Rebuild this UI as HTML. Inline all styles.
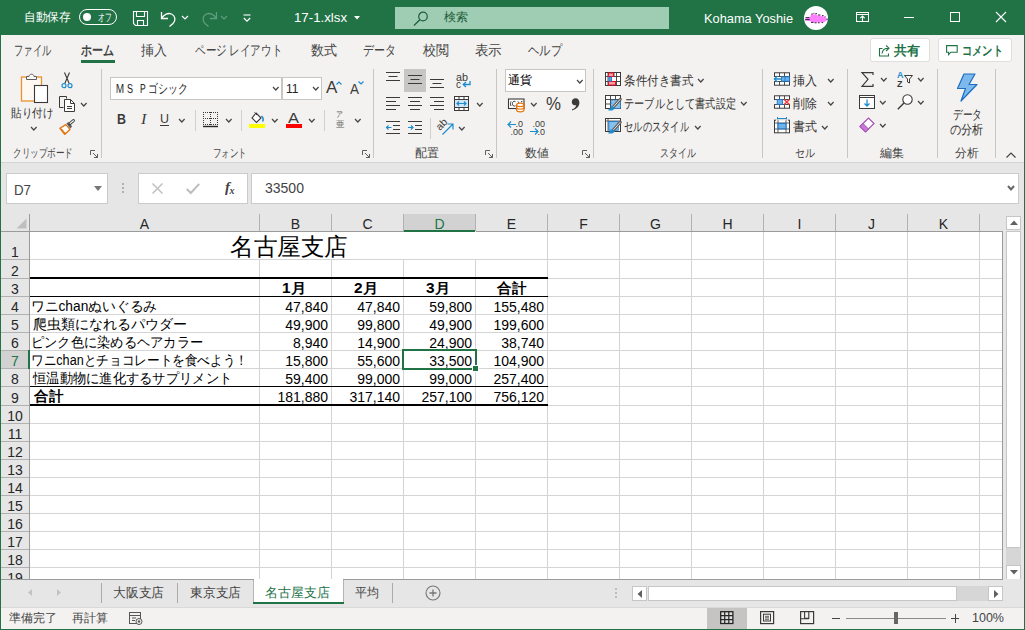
<!DOCTYPE html>
<html lang="ja"><head><meta charset="utf-8"><title>17-1.xlsx - Excel</title>
<style>
*{box-sizing:border-box;margin:0;padding:0}
html,body{width:1025px;height:630px;overflow:hidden;background:#e6e6e6}
body{position:relative;font-family:"Liberation Sans",sans-serif;font-size:12px;color:#262626}
.a{position:absolute}
.t{position:absolute;white-space:nowrap;line-height:1;transform-origin:0 0}
.n{position:absolute;white-space:nowrap;line-height:1;text-align:right;font-size:14px;color:#000;width:70px}
.c{position:absolute;white-space:nowrap;line-height:1;text-align:center;font-size:14px;color:#262626}
svg{overflow:visible}
</style></head>
<body>
<div class="a" style="left:0px;top:0px;width:1025px;height:35px;background:#217346"></div>
<div class="t" style="left:24px;top:11px;font-size:12px;color:#fff;transform:scaleX(0.979)">自動保存</div><div class="a" style="left:79px;top:9px;width:38px;height:16px;border:1px solid #fff;border-radius:8px"></div><div class="a" style="left:83px;top:13px;width:8px;height:8px;background:#fff;border-radius:4px"></div><div class="t" style="left:98px;top:12px;font-size:11px;color:#fff;transform:scaleX(0.614)">オフ</div>
<svg class="a" style="left:132px;top:10px" width="17" height="17" viewBox="0 0 17 17"><path d="M1.5 1.5 H15.5 V15.5 H3.5 L1.5 13.5 Z M4.5 1.5 V6.5 H12.5 V1.5 M5.5 15.5 V10.5 H11.5 V15.5" fill="none" stroke="#fff" stroke-width="1.1"/></svg><svg class="a" style="left:160px;top:10px" width="18" height="18" viewBox="0 0 18 18"><path d="M1.5 2 V8.5 H8 M1.8 8.2 C4 4.5 8 2.5 11.5 4 C15.5 5.8 16 10.5 13 13.5 L9.5 16.5" fill="none" stroke="#fff" stroke-width="1.3"/></svg><svg class="a" style="left:181px;top:14.8px" width="8" height="5" viewBox="0 0 8 5"><path d="M1 1 L4 4 L7 1" fill="none" stroke="#fff" stroke-width="1.2"/></svg><svg class="a" style="left:200px;top:10px" width="18" height="18" viewBox="0 0 18 18"><path d="M16.5 2 V8.5 H10 M16.2 8.2 C14 4.5 10 2.5 6.5 4 C2.5 5.8 2 10.5 5 13.5 L8.5 16.5" fill="none" stroke="#5f9d7c" stroke-width="1.3"/></svg><svg class="a" style="left:220px;top:14.8px" width="8" height="5" viewBox="0 0 8 5"><path d="M1 1 L4 4 L7 1" fill="none" stroke="#5f9d7c" stroke-width="1.2"/></svg><svg class="a" style="left:243px;top:14px" width="8" height="9" viewBox="0 0 8 9"><path d="M0.5 1 H7.5" stroke="#fff" stroke-width="1.1"/><path d="M0.8 4 L4 7.2 L7.2 4" fill="none" stroke="#fff" stroke-width="1.2"/></svg>
<div class="t" style="left:294px;top:11px;font-size:13px;color:#fff;transform:scaleX(1.019)">17-1.xlsx</div><svg class="a" style="left:354px;top:16px" width="7" height="4" viewBox="0 0 7 4"><path d="M0 0 H6 L3 3.5 Z" fill="#fff"/></svg><div class="a" style="left:395px;top:7px;width:274px;height:22px;background:#9fcdb3"></div><svg class="a" style="left:413px;top:11px" width="16" height="15" viewBox="0 0 16 15"><circle cx="10" cy="5.5" r="4.3" fill="none" stroke="#1e5e3a" stroke-width="1.2"/><path d="M6.8 8.8 L1 14.5" stroke="#1e5e3a" stroke-width="1.3"/></svg><div class="t" style="left:444px;top:11px;font-size:12px;color:#1e5e3a">検索</div>
<div class="t" style="left:704px;top:12px;font-size:13px;color:#fff;transform:scaleX(0.985)">Kohama Yoshie</div><div class="a" style="left:804px;top:6px;width:24px;height:24px;background:#fff;border-radius:12px"></div><svg class="a" style="left:804px;top:6px" width="24" height="24" viewBox="0 0 24 24"><path d="M1.2 12.6 L6 11.2 L7 8.6 L8.6 7.6 L9.6 9 L11.6 7.8 L13.4 9.4 L17.5 9.8 L21 11 L24 13.4 L21 15.8 L17.5 16.6 L8 16.6 L6.4 15.2 L1.2 14.6 Z" fill="#ff80ff"/><path d="M1.5 11.6 h4 M1.2 13.6 h4.5 M7.4 8 h1.2 M9.4 7.4 h1 M11.4 7.6 h1.6 M14 9 h2.4 M18 9.6 h1.6 M20.6 10.8 h1 M7 16.4 h2.4 M10.6 16.8 h2 M14 16.8 h1.6 M17.6 16.6 h1.6 M22.6 13.2 h1.2" stroke="#20102a" stroke-width="0.9"/></svg>
<svg class="a" style="left:856px;top:12px" width="13" height="10" viewBox="0 0 13 10"><rect x="0.5" y="0.5" width="12" height="9" fill="none" stroke="#fff" stroke-width="1"/><path d="M0.5 2.5 H12.5" stroke="#fff" stroke-width="1"/><path d="M6.5 9.5 V4.2 M4.3 6.2 L6.5 4 L8.7 6.2" fill="none" stroke="#fff" stroke-width="1.1"/></svg><div class="a" style="left:904px;top:17px;width:10px;height:1px;background:#fff"></div><div class="a" style="left:950px;top:12px;width:10px;height:10px;border:1px solid #fff"></div><svg class="a" style="left:996px;top:12px" width="10" height="10" viewBox="0 0 10 10"><path d="M0 0 L10 10 M10 0 L0 10" stroke="#fff" stroke-width="1.1"/></svg>
<div class="a" style="left:1px;top:35px;width:1023px;height:31px;background:#f3f2f1"></div>
<div class="t" style="left:14px;top:43px;font-size:14px;color:#444;transform:scaleX(0.661)">ファイル</div><div class="t" style="left:81px;top:43px;font-size:14px;color:#444;font-weight:bold;transform:scaleX(0.786)">ホーム</div><div class="t" style="left:141px;top:43px;font-size:14px;color:#444;transform:scaleX(0.929)">挿入</div><div class="t" style="left:195px;top:43px;font-size:14px;color:#444;transform:scaleX(0.751)">ページ レイアウト</div><div class="t" style="left:311px;top:43px;font-size:14px;color:#444;transform:scaleX(0.929)">数式</div><div class="t" style="left:363px;top:43px;font-size:14px;color:#444;transform:scaleX(0.786)">データ</div><div class="t" style="left:423px;top:43px;font-size:14px;color:#444;transform:scaleX(0.929)">校閲</div><div class="t" style="left:475px;top:43px;font-size:14px;color:#444;transform:scaleX(0.964)">表示</div><div class="t" style="left:528px;top:43px;font-size:14px;color:#444;transform:scaleX(0.810)">ヘルプ</div>
<div class="a" style="left:81px;top:60px;width:34px;height:3px;background:#217346"></div><div class="a" style="left:870px;top:38px;width:60px;height:24px;background:#fff;border:1px solid #e1dfdd;border-radius:3px"></div><svg class="a" style="left:877.5px;top:43.5px" width="13" height="13" viewBox="0 0 13 13"><path d="M4.5 4.5 H1.5 V12 H10.5 V9.5" fill="none" stroke="#217346" stroke-width="1.1"/><path d="M4 9.5 C4.5 6 7 4.2 10 4.2 M8 1.5 L11 4.2 L8 7" fill="none" stroke="#217346" stroke-width="1.1"/></svg><div class="t" style="left:894px;top:44px;font-size:13px;color:#217346;font-weight:bold">共有</div><div class="a" style="left:938px;top:38px;width:74px;height:24px;background:#fff;border:1px solid #e1dfdd;border-radius:3px"></div><svg class="a" style="left:946px;top:45px" width="12" height="11" viewBox="0 0 12 11"><path d="M0.6 0.6 H11.2 V7.2 H4.8 L2.6 9.6 V7.2 H0.6 Z" fill="none" stroke="#217346" stroke-width="1.1"/></svg><div class="t" style="left:962px;top:44px;font-size:13px;color:#217346;font-weight:bold;transform:scaleX(0.788)">コメント</div>
<div class="a" style="left:1px;top:66px;width:1023px;height:96px;background:#f3f2f1"></div><div class="a" style="left:1px;top:162px;width:1023px;height:1px;background:#d4d4d4"></div>
<div class="a" style="left:101px;top:69px;width:1px;height:89px;background:#c8c6c4"></div><div class="a" style="left:373px;top:69px;width:1px;height:89px;background:#c8c6c4"></div><div class="a" style="left:496px;top:69px;width:1px;height:89px;background:#c8c6c4"></div><div class="a" style="left:593px;top:69px;width:1px;height:89px;background:#c8c6c4"></div><div class="a" style="left:762px;top:69px;width:1px;height:89px;background:#c8c6c4"></div><div class="a" style="left:847px;top:69px;width:1px;height:89px;background:#c8c6c4"></div><div class="a" style="left:937px;top:69px;width:1px;height:89px;background:#c8c6c4"></div><div class="a" style="left:995px;top:69px;width:1px;height:89px;background:#c8c6c4"></div>
<div class="t" style="left:13px;top:147px;font-size:12px;color:#444;transform:scaleX(0.714)">クリップボード</div><div class="t" style="left:213px;top:147px;font-size:12px;color:#444;transform:scaleX(0.708)">フォント</div><div class="t" style="left:415px;top:147px;font-size:12px;color:#444">配置</div><div class="t" style="left:525px;top:147px;font-size:12px;color:#444">数値</div><div class="t" style="left:660px;top:147px;font-size:12px;color:#444;transform:scaleX(0.750)">スタイル</div><div class="t" style="left:795px;top:147px;font-size:12px;color:#444;transform:scaleX(0.833)">セル</div><div class="t" style="left:880px;top:147px;font-size:12px;color:#444">編集</div><div class="t" style="left:954.5px;top:147px;font-size:12px;color:#444;transform:scaleX(0.979)">分析</div>
<svg class="a" style="left:90px;top:150px" width="8" height="8" viewBox="0 0 8 8"><path d="M0.5 5 V0.5 H5" fill="none" stroke="#605e5c" stroke-width="1"/><path d="M3 3 L7.5 7.5 M7.5 4 V7.5 H4" fill="none" stroke="#605e5c" stroke-width="1"/></svg><svg class="a" style="left:362px;top:150px" width="8" height="8" viewBox="0 0 8 8"><path d="M0.5 5 V0.5 H5" fill="none" stroke="#605e5c" stroke-width="1"/><path d="M3 3 L7.5 7.5 M7.5 4 V7.5 H4" fill="none" stroke="#605e5c" stroke-width="1"/></svg><svg class="a" style="left:485px;top:150px" width="8" height="8" viewBox="0 0 8 8"><path d="M0.5 5 V0.5 H5" fill="none" stroke="#605e5c" stroke-width="1"/><path d="M3 3 L7.5 7.5 M7.5 4 V7.5 H4" fill="none" stroke="#605e5c" stroke-width="1"/></svg><svg class="a" style="left:582px;top:150px" width="8" height="8" viewBox="0 0 8 8"><path d="M0.5 5 V0.5 H5" fill="none" stroke="#605e5c" stroke-width="1"/><path d="M3 3 L7.5 7.5 M7.5 4 V7.5 H4" fill="none" stroke="#605e5c" stroke-width="1"/></svg>
<svg class="a" style="left:20px;top:72px" width="30" height="32" viewBox="0 0 30 32"><rect x="1.5" y="5" width="20" height="24" fill="#fdf9f2" stroke="#e8912d" stroke-width="1.3"/><path d="M6.5 7.5 V4.5 H9 C9 1.5 14 1.5 14 4.5 H16.5 V7.5 Z" fill="#f8f8f8" stroke="#605e5c" stroke-width="1"/><rect x="14.5" y="13.5" width="13" height="17" fill="#fff" stroke="#3b3a39" stroke-width="1.1"/></svg><div class="t" style="left:11px;top:107px;font-size:12px;color:#323130;transform:scaleX(0.875)">貼り付け</div><svg class="a" style="left:30px;top:125.8px" width="7.6" height="5" viewBox="0 0 7.6 5"><path d="M1 1 L3.8 4 L6.6 1" fill="none" stroke="#444" stroke-width="1.2"/></svg><svg class="a" style="left:61px;top:72px" width="12" height="17" viewBox="0 0 12 17"><path d="M3.5 0.5 L8.2 11.5 M8.5 0.5 L3.8 11.5" stroke="#3b3a39" stroke-width="1.1" fill="none"/><circle cx="3" cy="13.7" r="2" fill="none" stroke="#1e8bcd" stroke-width="1.2"/><circle cx="9" cy="13.7" r="2" fill="none" stroke="#1e8bcd" stroke-width="1.2"/></svg><svg class="a" style="left:59px;top:96px" width="17" height="16" viewBox="0 0 17 16"><path d="M4.5 11.5 H0.5 V0.5 H7.5 V2.5" fill="none" stroke="#3b3a39" stroke-width="1"/><path d="M5.5 3.5 H11.5 L15.5 7.5 V15.5 H5.5 Z" fill="#fff" stroke="#3b3a39" stroke-width="1"/><path d="M11.5 3.5 V7.5 H15.5 M8 10.5 H13 M8 12.5 H13" fill="none" stroke="#3b3a39" stroke-width="1"/></svg><svg class="a" style="left:80px;top:101.8px" width="7.6" height="5" viewBox="0 0 7.6 5"><path d="M1 1 L3.8 4 L6.6 1" fill="none" stroke="#444" stroke-width="1.2"/></svg><svg class="a" style="left:59px;top:119px" width="17" height="16" viewBox="0 0 17 16"><path d="M0.8 9.2 L6.8 5.6 L11 10.4 L5.6 15.4 Z" fill="#fff" stroke="#e3740c" stroke-width="1.3" stroke-linejoin="round"/><path d="M2.6 11.4 L7 14.6 M1.6 9.6 L4.4 12" stroke="#e3740c" stroke-width="1.1"/><path d="M7.4 4.6 L9.4 3 L13.2 7.6 L11.2 9.4 Z" fill="#605e5c"/><path d="M11 4.6 L14.4 1.6" stroke="#3b3a39" stroke-width="3" stroke-linecap="round"/><path d="M11.2 4.4 L14.3 1.7" stroke="#fff" stroke-width="1.2" stroke-linecap="round"/></svg>
<div class="a" style="left:110px;top:77px;width:172px;height:23px;background:#fff;border:1px solid #c8c6c4"></div><div class="a" style="left:282px;top:77px;width:40px;height:23px;background:#fff;border:1px solid #c8c6c4;border-left:none"></div><div class="a" style="left:282px;top:78px;width:1px;height:21px;background:#c8c6c4"></div><div class="t" style="left:114.5px;top:81.5px;font-size:13px;color:#262626;transform:scaleX(0.766)">ＭＳ Ｐゴシック</div><svg class="a" style="left:272px;top:85.8px" width="7.6" height="5" viewBox="0 0 7.6 5"><path d="M1 1 L3.8 4 L6.6 1" fill="none" stroke="#444" stroke-width="1.2"/></svg><div class="t" style="left:285.5px;top:82px;font-size:13px;color:#262626;transform:scaleX(0.926)">11</div><svg class="a" style="left:312px;top:85.8px" width="7.6" height="5" viewBox="0 0 7.6 5"><path d="M1 1 L3.8 4 L6.6 1" fill="none" stroke="#444" stroke-width="1.2"/></svg><div class="t" style="left:326px;top:79px;font-size:17px;color:#3b3a39">A</div><svg class="a" style="left:335.5px;top:81px" width="6" height="4" viewBox="0 0 6 4"><path d="M0.5 3.5 L3 1 L5.5 3.5" fill="none" stroke="#1e8bcd" stroke-width="1.2"/></svg><div class="t" style="left:350px;top:82px;font-size:14px;color:#3b3a39;transform:scaleX(0.963)">A</div><svg class="a" style="left:357.5px;top:81px" width="6" height="4" viewBox="0 0 6 4"><path d="M0.5 0.5 L3 3 L5.5 0.5" fill="none" stroke="#1e8bcd" stroke-width="1.2"/></svg><div class="t" style="left:117px;top:112px;font-size:14px;color:#3b3a39;font-weight:bold;transform:scaleX(0.889)">B</div><div class="t" style="left:141px;top:112px;font-size:14.5px;color:#3b3a39;transform:scaleX(1.116);font-family:'Liberation Serif',serif;font-style:italic">I</div><div class="t" style="left:160px;top:112px;font-size:13px;color:#3b3a39;transform:scaleX(0.958)">U</div><div class="a" style="left:160px;top:125px;width:9px;height:1px;background:#3b3a39"></div><svg class="a" style="left:178px;top:117.8px" width="7.6" height="5" viewBox="0 0 7.6 5"><path d="M1 1 L3.8 4 L6.6 1" fill="none" stroke="#444" stroke-width="1.2"/></svg><div class="a" style="left:195px;top:110px;width:1px;height:21px;background:#d2d0ce"></div><div class="a" style="left:241px;top:110px;width:1px;height:21px;background:#d2d0ce"></div><div class="a" style="left:324px;top:110px;width:1px;height:21px;background:#d2d0ce"></div><svg class="a" style="left:203px;top:112px" width="16" height="16" viewBox="0 0 16 16"><path d="M0 0.5 H15 M0 6.5 H15 M0 12.5 H15" stroke="#3b3a39" stroke-width="1" stroke-dasharray="1 1" fill="none"/><path d="M0.5 0 V13 M7.5 0 V13 M14.5 0 V13" stroke="#3b3a39" stroke-width="1" stroke-dasharray="1 1" fill="none"/><path d="M0 14.5 H15" stroke="#262626" stroke-width="1.4"/></svg><svg class="a" style="left:225px;top:117.8px" width="7.6" height="5" viewBox="0 0 7.6 5"><path d="M1 1 L3.8 4 L6.6 1" fill="none" stroke="#444" stroke-width="1.2"/></svg><svg class="a" style="left:249px;top:111px" width="17" height="17" viewBox="0 0 17 17"><path d="M7 2 L12 7 L7.5 11.5 L3 7 Z" fill="#fff" stroke="#3b3a39" stroke-width="1.1"/><path d="M5.5 1.5 L8 4" stroke="#3b3a39" stroke-width="1"/><path d="M12.5 5 C14.5 7 14.5 9 13.5 10.5" fill="none" stroke="#1e8bcd" stroke-width="1.5"/></svg><div class="a" style="left:249px;top:124px;width:16px;height:4px;background:#ffff00"></div><svg class="a" style="left:271px;top:117.8px" width="7.6" height="5" viewBox="0 0 7.6 5"><path d="M1 1 L3.8 4 L6.6 1" fill="none" stroke="#444" stroke-width="1.2"/></svg><div class="t" style="left:288px;top:110px;font-size:15px;color:#3b3a39;transform:scaleX(1.098)">A</div><div class="a" style="left:286px;top:124px;width:16px;height:4px;background:#ff0000"></div><svg class="a" style="left:308px;top:117.8px" width="7.6" height="5" viewBox="0 0 7.6 5"><path d="M1 1 L3.8 4 L6.6 1" fill="none" stroke="#444" stroke-width="1.2"/></svg><div class="t" style="left:336px;top:111px;font-size:8px;color:#605e5c;transform:scaleX(0.875)">ア</div><div class="t" style="left:335.5px;top:119.5px;font-size:9px;color:#605e5c;transform:scaleX(0.944)">亜</div><svg class="a" style="left:354px;top:117.8px" width="7.6" height="5" viewBox="0 0 7.6 5"><path d="M1 1 L3.8 4 L6.6 1" fill="none" stroke="#444" stroke-width="1.2"/></svg>
<div class="a" style="left:404px;top:69px;width:22px;height:23px;background:#c8c6c4"></div><svg class="a" style="left:386px;top:72px" width="14" height="12" viewBox="0 0 14 12"><path d="M0 0.5 H14" stroke="#3b3a39" stroke-width="1"/><path d="M2.5 4.5 H11.5" stroke="#3b3a39" stroke-width="1"/><path d="M0 8.5 H14" stroke="#3b3a39" stroke-width="1"/></svg><svg class="a" style="left:408px;top:75px" width="14" height="12" viewBox="0 0 14 12"><path d="M0 0.5 H14" stroke="#3b3a39" stroke-width="1"/><path d="M2.5 4.5 H11.5" stroke="#3b3a39" stroke-width="1"/><path d="M0 8.5 H14" stroke="#3b3a39" stroke-width="1"/></svg><svg class="a" style="left:430px;top:79px" width="14" height="12" viewBox="0 0 14 12"><path d="M0 0.5 H14" stroke="#3b3a39" stroke-width="1"/><path d="M2.5 4.5 H11.5" stroke="#3b3a39" stroke-width="1"/><path d="M0 8.5 H14" stroke="#3b3a39" stroke-width="1"/></svg><div class="t" style="left:456px;top:71.5px;font-size:10.5px;color:#3b3a39;transform:scaleX(1.027)">ab</div><div class="t" style="left:456px;top:79px;font-size:10.5px;color:#3b3a39;transform:scaleX(0.952)">c</div><svg class="a" style="left:462px;top:81px" width="9" height="7" viewBox="0 0 9 7"><path d="M8 0 V3.5 H1.5 M4 1 L1.2 3.5 L4 6" fill="none" stroke="#1e8bcd" stroke-width="1.3"/></svg><svg class="a" style="left:386px;top:97px" width="14" height="16" viewBox="0 0 14 16"><path d="M0 0.5 H14" stroke="#3b3a39" stroke-width="1"/><path d="M0 4.5 H10" stroke="#3b3a39" stroke-width="1"/><path d="M0 8.5 H14" stroke="#3b3a39" stroke-width="1"/><path d="M0 12.5 H10" stroke="#3b3a39" stroke-width="1"/></svg><svg class="a" style="left:408px;top:97px" width="14" height="16" viewBox="0 0 14 16"><path d="M0 0.5 H14" stroke="#3b3a39" stroke-width="1"/><path d="M2 4.5 H12" stroke="#3b3a39" stroke-width="1"/><path d="M0 8.5 H14" stroke="#3b3a39" stroke-width="1"/><path d="M2 12.5 H12" stroke="#3b3a39" stroke-width="1"/></svg><svg class="a" style="left:430px;top:97px" width="14" height="16" viewBox="0 0 14 16"><path d="M0 0.5 H14" stroke="#3b3a39" stroke-width="1"/><path d="M4 4.5 H14" stroke="#3b3a39" stroke-width="1"/><path d="M0 8.5 H14" stroke="#3b3a39" stroke-width="1"/><path d="M4 12.5 H14" stroke="#3b3a39" stroke-width="1"/></svg><svg class="a" style="left:454px;top:96px" width="15" height="15" viewBox="0 0 15 15"><rect x="0.5" y="0.5" width="14" height="14" fill="#fff" stroke="#3b3a39" stroke-width="1"/><path d="M0.5 3.5 H14.5 M0.5 11.5 H14.5 M5 0.5 V3.5 M10 0.5 V3.5 M5 11.5 V14.5 M10 11.5 V14.5" stroke="#3b3a39" stroke-width="1"/><rect x="1" y="4" width="13" height="7" fill="#cfe6f7"/><path d="M3 7.5 H12 M5 5.5 L3 7.5 L5 9.5 M10 5.5 L12 7.5 L10 9.5" fill="none" stroke="#1e8bcd" stroke-width="1.2"/></svg><svg class="a" style="left:476px;top:101.8px" width="7.6" height="5" viewBox="0 0 7.6 5"><path d="M1 1 L3.8 4 L6.6 1" fill="none" stroke="#444" stroke-width="1.2"/></svg><svg class="a" style="left:386px;top:121px" width="14" height="14" viewBox="0 0 14 14"><path d="M0 0.5 H14 M7 4.5 H14 M7 8.5 H14 M0 12.5 H14" stroke="#3b3a39" stroke-width="1"/><path d="M0.5 6.5 H5.5 M2.5 4.5 L0.5 6.5 L2.5 8.5" fill="none" stroke="#1e8bcd" stroke-width="1.2"/></svg><svg class="a" style="left:408px;top:121px" width="14" height="14" viewBox="0 0 14 14"><path d="M0 0.5 H14 M7 4.5 H14 M7 8.5 H14 M0 12.5 H14" stroke="#3b3a39" stroke-width="1"/><path d="M0 6.5 H5 M3 4.5 L5 6.5 L3 8.5" fill="none" stroke="#1e8bcd" stroke-width="1.2"/></svg><div class="a" style="left:430px;top:118px;width:1px;height:21px;background:#d2d0ce"></div><svg class="a" style="left:437px;top:119px" width="18" height="17" viewBox="0 0 18 17"><text x="0" y="9" font-size="10.5" fill="#3b3a39" transform="rotate(-45 5 7)" font-family="Liberation Sans">ab</text><path d="M5.5 15.5 L15.5 5.5 M10.5 5 H16 V10.5" fill="none" stroke="#1e8bcd" stroke-width="1.2"/></svg><svg class="a" style="left:458px;top:125.8px" width="7.6" height="5" viewBox="0 0 7.6 5"><path d="M1 1 L3.8 4 L6.6 1" fill="none" stroke="#444" stroke-width="1.2"/></svg>
<div class="a" style="left:505px;top:69px;width:81px;height:23px;background:#fff;border:1px solid #c8c6c4"></div><div class="t" style="left:508px;top:74px;font-size:12px;color:#000">通貨</div><svg class="a" style="left:576px;top:78.8px" width="7.6" height="5" viewBox="0 0 7.6 5"><path d="M1 1 L3.8 4 L6.6 1" fill="none" stroke="#444" stroke-width="1.2"/></svg><svg class="a" style="left:508px;top:98px" width="17" height="15" viewBox="0 0 17 15"><rect x="0.5" y="1" width="15.5" height="9.5" fill="#fff" stroke="#3b3a39" stroke-width="1.1"/><path d="M7.5 3.6 C5.6 2.6 4.4 4 4.4 5.7 C4.4 7.4 5.6 8.6 7.5 7.8 M3 3.4 C2.3 4.8 2.3 6.6 3 8 M10 3.4 C10.7 4.4 10.8 5 10.8 5.4 M13 3.6 h1.4" fill="none" stroke="#3b3a39" stroke-width="1"/><path d="M8.6 7 V12 C8.6 14.4 15.9 14.4 15.9 12 V7 C15.9 4.6 8.6 4.6 8.6 7 Z" fill="#fff" stroke="#e3740c" stroke-width="1.2"/><path d="M8.6 7 C8.6 9.2 15.9 9.2 15.9 7 M8.6 9.6 C8.6 11.8 15.9 11.8 15.9 9.6" fill="none" stroke="#e3740c" stroke-width="1.2"/></svg><svg class="a" style="left:530px;top:101.8px" width="7.6" height="5" viewBox="0 0 7.6 5"><path d="M1 1 L3.8 4 L6.6 1" fill="none" stroke="#444" stroke-width="1.2"/></svg><div class="t" style="left:545.5px;top:94px;font-size:19px;color:#3b3a39;transform:scaleX(0.887)">%</div><svg class="a" style="left:571px;top:98px" width="9" height="13" viewBox="0 0 9 13"><path d="M4.6 0.3 C7 0.3 8.4 2.2 8.4 4.8 C8.4 8.4 5.6 11.2 1.2 12.4 L0.8 11.6 C3.4 10.6 5 9 5.2 7.2 C2.8 7.6 0.8 6.2 0.8 3.9 C0.8 1.8 2.4 0.3 4.6 0.3 Z" fill="#3b3a39"/></svg><svg class="a" style="left:507px;top:119px" width="17" height="17" viewBox="0 0 17 17"><path d="M1.2 5.5 H9 M4 2.5 L1 5.5 L4 8.5" fill="none" stroke="#1e8bcd" stroke-width="1.2"/><text x="8.6" y="8" font-size="9.5" fill="#3b3a39" font-family="Liberation Sans" textLength="7.5" lengthAdjust="spacingAndGlyphs">.0</text><text x="3.6" y="16" font-size="9.5" fill="#3b3a39" font-family="Liberation Sans" textLength="12.5" lengthAdjust="spacingAndGlyphs">.00</text></svg><svg class="a" style="left:530px;top:119px" width="17" height="17" viewBox="0 0 17 17"><text x="2.6" y="8" font-size="9.5" fill="#3b3a39" font-family="Liberation Sans" textLength="12.5" lengthAdjust="spacingAndGlyphs">.00</text><path d="M0 12.5 H8 M5 9.5 L8 12.5 L5 15.5" fill="none" stroke="#1e8bcd" stroke-width="1.2"/><text x="7.6" y="16" font-size="9.5" fill="#3b3a39" font-family="Liberation Sans" textLength="7.5" lengthAdjust="spacingAndGlyphs">.0</text></svg>
<svg class="a" style="left:605px;top:72px" width="17" height="15" viewBox="0 0 17 15"><rect x="0.5" y="0.5" width="15" height="13" fill="#fff" stroke="#3b3a39" stroke-width="1"/><path d="M0.5 4.5 H15.5 M0.5 9.5 H15.5 M3 0.5 V13.5 M9 0.5 V4.5 M11.5 0.5 V13.5" stroke="#3b3a39" stroke-width="0.9"/><rect x="3.5" y="1" width="5" height="3.5" fill="#f7a1a8" stroke="#e81123" stroke-width="1"/><rect x="3.5" y="9.5" width="7" height="3.5" fill="#f7a1a8" stroke="#e81123" stroke-width="1"/><rect x="4" y="5" width="2.6" height="4.2" fill="#57a9e6" stroke="#1b6ec2" stroke-width="0.8"/></svg><div class="t" style="left:624px;top:73.5px;font-size:13px;color:#323130;transform:scaleX(0.885)">条件付き書式</div><svg class="a" style="left:697px;top:77.8px" width="7.6" height="5" viewBox="0 0 7.6 5"><path d="M1 1 L3.8 4 L6.6 1" fill="none" stroke="#444" stroke-width="1.2"/></svg><svg class="a" style="left:605px;top:95px" width="17" height="16" viewBox="0 0 17 16"><rect x="0.5" y="0.5" width="15" height="13" fill="#fff" stroke="#3b3a39" stroke-width="1"/><path d="M0.5 4.5 H15.5 M5.5 0.5 V13.5 M10.5 0.5 V4.5 M0.5 9 H5.5" stroke="#3b3a39" stroke-width="0.9"/><rect x="6" y="5" width="9.5" height="8.5" fill="#86c1ee" stroke="#1b74c9" stroke-width="0.8" stroke-dasharray="2 1.2"/><path d="M15.3 4.2 L8.2 12.2" stroke="#605e5c" stroke-width="3" stroke-linecap="round"/><path d="M15.2 4.3 L8.4 12" stroke="#e6e6e6" stroke-width="1"/><path d="M7.2 11 C6 11.6 5.4 14.4 2.6 15 C5.6 16.4 9.2 15.2 9.8 13 Z" fill="#1e8bcd"/></svg><div class="t" style="left:624px;top:96.5px;font-size:13px;color:#323130;transform:scaleX(0.783)">テーブルとして書式設定</div><svg class="a" style="left:740px;top:100.8px" width="7.6" height="5" viewBox="0 0 7.6 5"><path d="M1 1 L3.8 4 L6.6 1" fill="none" stroke="#444" stroke-width="1.2"/></svg><svg class="a" style="left:605px;top:118px" width="17" height="16" viewBox="0 0 17 16"><rect x="0.5" y="0.5" width="15" height="13" fill="#fff" stroke="#3b3a39" stroke-width="1"/><path d="M0.5 3 H15.5 M3 0.5 V13.5" stroke="#3b3a39" stroke-width="0.8"/><rect x="3.8" y="3.6" width="9.4" height="8.6" fill="#86c1ee" stroke="#1b74c9" stroke-width="0.9"/><path d="M15.3 4.2 L8.2 12.2" stroke="#605e5c" stroke-width="3" stroke-linecap="round"/><path d="M15.2 4.3 L8.4 12" stroke="#e6e6e6" stroke-width="1"/><path d="M7.2 11 C6 11.6 5.4 14.4 2.6 15 C5.6 16.4 9.2 15.2 9.8 13 Z" fill="#1e8bcd"/></svg><div class="t" style="left:624px;top:119.5px;font-size:13px;color:#323130;transform:scaleX(0.714)">セルのスタイル</div><svg class="a" style="left:694px;top:124.8px" width="7.6" height="5" viewBox="0 0 7.6 5"><path d="M1 1 L3.8 4 L6.6 1" fill="none" stroke="#444" stroke-width="1.2"/></svg>
<svg class="a" style="left:774px;top:72px" width="17" height="15" viewBox="0 0 17 15"><rect x="0.5" y="0.8" width="15" height="12.4" fill="#fff" stroke="#3b3a39" stroke-width="1"/><path d="M0.5 4.5 H15.5 M0.5 9.5 H15.5 M5.5 0.8 V4.5 M10.5 0.8 V4.5 M5.5 9.5 V13.2 M10.5 9.5 V13.2" stroke="#3b3a39" stroke-width="0.9"/><rect x="7.4" y="4.8" width="8.2" height="4.4" fill="#6db3ea" stroke="#1b74c9" stroke-width="0.9"/><path d="M11 4.8 V9.2" stroke="#1b74c9" stroke-width="0.8"/><rect x="-0.3" y="5" width="1.6" height="4" fill="#fff"/><path d="M0.4 7 H7.5 M3.4 4 L0.4 7 L3.4 10" fill="none" stroke="#1e8bcd" stroke-width="1.3"/></svg><div class="t" style="left:793px;top:73.5px;font-size:13px;color:#323130;transform:scaleX(0.923)">挿入</div><svg class="a" style="left:827px;top:77.8px" width="7.6" height="5" viewBox="0 0 7.6 5"><path d="M1 1 L3.8 4 L6.6 1" fill="none" stroke="#444" stroke-width="1.2"/></svg><svg class="a" style="left:774px;top:95px" width="17" height="15" viewBox="0 0 17 15"><rect x="0.5" y="0.8" width="15" height="12.4" fill="#fff" stroke="#3b3a39" stroke-width="1"/><rect x="-0.2" y="5" width="17" height="4.2" fill="#f3f2f1"/><path d="M0.5 4.5 H15.5 M0.5 9.5 H15.5 M5.5 0.8 V4.5 M10.5 0.8 V4.5 M5.5 9.5 V13.2 M10.5 9.5 V13.2" stroke="#3b3a39" stroke-width="0.9"/><rect x="3.2" y="4.6" width="5.2" height="4.8" fill="#6db3ea" stroke="#1b74c9" stroke-width="0.9"/><path d="M10.2 4.6 L15.4 9.6 M15.4 4.6 L10.2 9.6" stroke="#f03a3a" stroke-width="1.4"/></svg><div class="t" style="left:793px;top:96.5px;font-size:13px;color:#323130;transform:scaleX(0.923)">削除</div><svg class="a" style="left:827px;top:100.8px" width="7.6" height="5" viewBox="0 0 7.6 5"><path d="M1 1 L3.8 4 L6.6 1" fill="none" stroke="#444" stroke-width="1.2"/></svg><svg class="a" style="left:774px;top:117px" width="17" height="17" viewBox="0 0 17 17"><path d="M3.5 1.5 H12.5 M3.5 0 V3 M12.5 0 V3" stroke="#1e8bcd" stroke-width="1"/><rect x="0.5" y="3.2" width="15" height="12.6" fill="#fff" stroke="#3b3a39" stroke-width="1"/><rect x="2" y="2.4" width="12" height="1.6" fill="#f3f2f1"/><path d="M0.5 6 H15.5 M0.5 12 H15.5 M4 3.2 V15.8 M12 3.2 V15.8" stroke="#3b3a39" stroke-width="0.8"/><rect x="4" y="6.4" width="8" height="5.4" fill="#6db3ea" stroke="#1b74c9" stroke-width="1"/></svg><div class="t" style="left:793px;top:119.5px;font-size:13px;color:#323130;transform:scaleX(0.923)">書式</div><svg class="a" style="left:821px;top:124.8px" width="7.6" height="5" viewBox="0 0 7.6 5"><path d="M1 1 L3.8 4 L6.6 1" fill="none" stroke="#444" stroke-width="1.2"/></svg>
<svg class="a" style="left:861px;top:72px" width="13" height="15" viewBox="0 0 13 15"><path d="M12 3 V0.6 H1 L7 7.3 L1 14.4 H12 V12" fill="none" stroke="#3b3a39" stroke-width="1.2"/></svg><svg class="a" style="left:880px;top:76.8px" width="7.6" height="5" viewBox="0 0 7.6 5"><path d="M1 1 L3.8 4 L6.6 1" fill="none" stroke="#444" stroke-width="1.2"/></svg><svg class="a" style="left:896px;top:70px" width="18" height="18" viewBox="0 0 18 18"><text x="1" y="8" font-size="9" font-weight="bold" fill="#1e8bcd" font-family="Liberation Sans">A</text><text x="1" y="17" font-size="9" font-weight="bold" fill="#3b3a39" font-family="Liberation Sans">Z</text><path d="M8.5 5.5 H16.5 L13.5 9 V13 L11.5 12 V9 Z" fill="#fff" stroke="#3b3a39" stroke-width="1"/></svg><svg class="a" style="left:917px;top:76.8px" width="7.6" height="5" viewBox="0 0 7.6 5"><path d="M1 1 L3.8 4 L6.6 1" fill="none" stroke="#444" stroke-width="1.2"/></svg><svg class="a" style="left:859px;top:95px" width="17" height="15" viewBox="0 0 17 15"><rect x="0.5" y="0.5" width="15" height="13" fill="#fff" stroke="#3b3a39" stroke-width="1"/><path d="M0.5 2.5 H15.5" stroke="#3b3a39" stroke-width="1"/><path d="M8 4.5 V11 M5.5 8.5 L8 11 L10.5 8.5" fill="none" stroke="#1e8bcd" stroke-width="1.3"/></svg><svg class="a" style="left:879px;top:99.8px" width="7.6" height="5" viewBox="0 0 7.6 5"><path d="M1 1 L3.8 4 L6.6 1" fill="none" stroke="#444" stroke-width="1.2"/></svg><svg class="a" style="left:897px;top:94px" width="17" height="16" viewBox="0 0 17 16"><circle cx="10.5" cy="5.5" r="4.7" fill="#fff" stroke="#3b3a39" stroke-width="1.1"/><path d="M7 9 L0.8 15.2" stroke="#3b3a39" stroke-width="1.4"/></svg><svg class="a" style="left:917px;top:99.8px" width="7.6" height="5" viewBox="0 0 7.6 5"><path d="M1 1 L3.8 4 L6.6 1" fill="none" stroke="#444" stroke-width="1.2"/></svg><svg class="a" style="left:859px;top:117px" width="16" height="16" viewBox="0 0 16 16"><path d="M1 9.5 L9.5 1 L15 6.5 L6.5 15 Z" fill="#fff" stroke="#a34fb5" stroke-width="1.2"/><path d="M1 9.5 L4 6.5 L9.5 12 L6.5 15 Z" fill="#c67ad3" stroke="#a34fb5" stroke-width="1"/></svg><svg class="a" style="left:879px;top:122.8px" width="7.6" height="5" viewBox="0 0 7.6 5"><path d="M1 1 L3.8 4 L6.6 1" fill="none" stroke="#444" stroke-width="1.2"/></svg>
<svg class="a" style="left:956px;top:73px" width="22" height="29" viewBox="0 0 22 29"><path d="M8 1 H19 L13 11.5 H21 L5 28 L9.5 15.5 H1.5 Z" fill="#7db9ec" stroke="#1b6ec2" stroke-width="1.2" stroke-linejoin="round"/></svg><div class="t" style="left:953px;top:107.5px;font-size:13px;color:#323130;transform:scaleX(0.744)">データ</div><div class="t" style="left:950px;top:122.5px;font-size:13px;color:#323130;transform:scaleX(0.859)">の分析</div><svg class="a" style="left:1006px;top:152px" width="10" height="6" viewBox="0 0 10 6"><path d="M0.5 5.5 L5 1 L9.5 5.5" fill="none" stroke="#444" stroke-width="1.2"/></svg>
<div class="a" style="left:6px;top:173px;width:102px;height:31px;background:#fff;border:1px solid #cbcbcb"></div><div class="t" style="left:14px;top:183px;font-size:14px;color:#444;transform:scaleX(0.949)">D7</div><svg class="a" style="left:94px;top:186px" width="8" height="5" viewBox="0 0 8 5"><path d="M0 0 H8 L4 5 Z" fill="#777"/></svg><div class="a" style="left:122px;top:183px;width:2px;height:2px;background:#b0b0b0"></div><div class="a" style="left:122px;top:187px;width:2px;height:2px;background:#b0b0b0"></div><div class="a" style="left:122px;top:191px;width:2px;height:2px;background:#b0b0b0"></div><div class="a" style="left:138px;top:173px;width:110px;height:31px;background:#fff;border:1px solid #cbcbcb"></div><svg class="a" style="left:152px;top:183px" width="11" height="11" viewBox="0 0 11 11"><path d="M0.5 0.5 L10.5 10.5 M10.5 0.5 L0.5 10.5" stroke="#c0c0c0" stroke-width="1.5"/></svg><svg class="a" style="left:186px;top:183px" width="14" height="11" viewBox="0 0 14 11"><path d="M0.8 6 L4.8 10 L13.2 0.8" fill="none" stroke="#bdbdbd" stroke-width="2"/></svg><div class="t" style="left:225px;top:181px;font-size:14px;color:#444;font-weight:bold;transform:scaleX(1.070);font-family:'Liberation Serif',serif;font-style:italic">f</div><div class="t" style="left:229.5px;top:186px;font-size:10px;color:#444;font-weight:bold;font-family:'Liberation Serif',serif;font-style:italic">x</div><div class="a" style="left:251px;top:173px;width:768px;height:31px;background:#fff;border:1px solid #cbcbcb"></div><div class="t" style="left:265px;top:181px;font-size:14px;color:#444">33500</div><svg class="a" style="left:1006.5px;top:185.3px" width="8" height="5.4" viewBox="0 0 8 5.4"><path d="M1 1 L4 4.4 L7 1" fill="none" stroke="#666" stroke-width="2"/></svg>
<div class="a" style="left:30px;top:232px;width:973px;height:347px;background:#fff"></div>
<svg class="a" style="left:16px;top:218px" width="11" height="11" viewBox="0 0 11 11"><path d="M10.5 0.5 V10.5 H0.5 Z" fill="#bfbfbf"/></svg><div class="c" style="left:30px;top:217px;width:229px">A</div><div class="a" style="left:259px;top:214px;width:1px;height:17px;background:#b1b1b1"></div><div class="a" style="left:259px;top:232px;width:1px;height:347px;background:#d4d4d4"></div>
<div class="c" style="left:260px;top:217px;width:71px">B</div><div class="a" style="left:331px;top:214px;width:1px;height:17px;background:#b1b1b1"></div><div class="a" style="left:331px;top:232px;width:1px;height:347px;background:#d4d4d4"></div>
<div class="c" style="left:332px;top:217px;width:71px">C</div><div class="a" style="left:403px;top:214px;width:1px;height:17px;background:#b1b1b1"></div><div class="a" style="left:403px;top:232px;width:1px;height:347px;background:#d4d4d4"></div>
<div class="a" style="left:404px;top:214px;width:71px;height:16px;background:#d2d2d2"></div><div class="a" style="left:404px;top:230px;width:71px;height:2px;background:#217346"></div><div class="c" style="left:404px;top:217px;width:71px;color:#217346">D</div><div class="a" style="left:475px;top:214px;width:1px;height:17px;background:#b1b1b1"></div><div class="a" style="left:475px;top:232px;width:1px;height:347px;background:#d4d4d4"></div>
<div class="c" style="left:476px;top:217px;width:71px">E</div><div class="a" style="left:547px;top:214px;width:1px;height:17px;background:#b1b1b1"></div><div class="a" style="left:547px;top:232px;width:1px;height:347px;background:#d4d4d4"></div>
<div class="c" style="left:548px;top:217px;width:71px">F</div><div class="a" style="left:619px;top:214px;width:1px;height:17px;background:#b1b1b1"></div><div class="a" style="left:619px;top:232px;width:1px;height:347px;background:#d4d4d4"></div>
<div class="c" style="left:620px;top:217px;width:71px">G</div><div class="a" style="left:691px;top:214px;width:1px;height:17px;background:#b1b1b1"></div><div class="a" style="left:691px;top:232px;width:1px;height:347px;background:#d4d4d4"></div>
<div class="c" style="left:692px;top:217px;width:71px">H</div><div class="a" style="left:763px;top:214px;width:1px;height:17px;background:#b1b1b1"></div><div class="a" style="left:763px;top:232px;width:1px;height:347px;background:#d4d4d4"></div>
<div class="c" style="left:764px;top:217px;width:71px">I</div><div class="a" style="left:835px;top:214px;width:1px;height:17px;background:#b1b1b1"></div><div class="a" style="left:835px;top:232px;width:1px;height:347px;background:#d4d4d4"></div>
<div class="c" style="left:836px;top:217px;width:71px">J</div><div class="a" style="left:907px;top:214px;width:1px;height:17px;background:#b1b1b1"></div><div class="a" style="left:907px;top:232px;width:1px;height:347px;background:#d4d4d4"></div>
<div class="c" style="left:908px;top:217px;width:71px">K</div><div class="a" style="left:979px;top:214px;width:1px;height:17px;background:#b1b1b1"></div><div class="a" style="left:979px;top:232px;width:1px;height:347px;background:#d4d4d4"></div>
<div class="a" style="left:1px;top:231px;width:403px;height:1px;background:#9b9b9b"></div><div class="a" style="left:476px;top:231px;width:527px;height:1px;background:#9b9b9b"></div><div class="a" style="left:29px;top:214px;width:1px;height:365px;background:#9b9b9b"></div><div class="a" style="left:1002px;top:231px;width:1px;height:348px;background:#9b9b9b"></div>
<div class="a" style="left:30px;top:259px;width:972px;height:1px;background:#d4d4d4"></div><div class="a" style="left:1px;top:259px;width:28px;height:1px;background:#b1b1b1"></div><div class="c" style="left:1px;top:245px;width:28px">1</div>
<div class="a" style="left:30px;top:278px;width:972px;height:1px;background:#d4d4d4"></div><div class="a" style="left:1px;top:278px;width:28px;height:1px;background:#b1b1b1"></div><div class="c" style="left:1px;top:264px;width:28px">2</div>
<div class="a" style="left:30px;top:296px;width:972px;height:1px;background:#d4d4d4"></div><div class="a" style="left:1px;top:296px;width:28px;height:1px;background:#b1b1b1"></div><div class="c" style="left:1px;top:282px;width:28px">3</div>
<div class="a" style="left:30px;top:314px;width:972px;height:1px;background:#d4d4d4"></div><div class="a" style="left:1px;top:314px;width:28px;height:1px;background:#b1b1b1"></div><div class="c" style="left:1px;top:300px;width:28px">4</div>
<div class="a" style="left:30px;top:332px;width:972px;height:1px;background:#d4d4d4"></div><div class="a" style="left:1px;top:332px;width:28px;height:1px;background:#b1b1b1"></div><div class="c" style="left:1px;top:318px;width:28px">5</div>
<div class="a" style="left:30px;top:350px;width:972px;height:1px;background:#d4d4d4"></div><div class="a" style="left:1px;top:350px;width:28px;height:1px;background:#b1b1b1"></div><div class="c" style="left:1px;top:336px;width:28px">6</div>
<div class="a" style="left:30px;top:368px;width:972px;height:1px;background:#d4d4d4"></div><div class="a" style="left:1px;top:368px;width:28px;height:1px;background:#b1b1b1"></div><div class="a" style="left:1px;top:351px;width:27px;height:17px;background:#d2d2d2"></div><div class="a" style="left:28px;top:350px;width:2px;height:19px;background:#217346"></div><div class="c" style="left:1px;top:354px;width:28px;color:#217346">7</div>
<div class="a" style="left:30px;top:386px;width:972px;height:1px;background:#d4d4d4"></div><div class="a" style="left:1px;top:386px;width:28px;height:1px;background:#b1b1b1"></div><div class="c" style="left:1px;top:372px;width:28px">8</div>
<div class="a" style="left:30px;top:405px;width:972px;height:1px;background:#d4d4d4"></div><div class="a" style="left:1px;top:405px;width:28px;height:1px;background:#b1b1b1"></div><div class="c" style="left:1px;top:391px;width:28px">9</div>
<div class="a" style="left:30px;top:423px;width:972px;height:1px;background:#d4d4d4"></div><div class="a" style="left:1px;top:423px;width:28px;height:1px;background:#b1b1b1"></div><div class="c" style="left:1px;top:409px;width:28px">10</div>
<div class="a" style="left:30px;top:441px;width:972px;height:1px;background:#d4d4d4"></div><div class="a" style="left:1px;top:441px;width:28px;height:1px;background:#b1b1b1"></div><div class="c" style="left:1px;top:427px;width:28px">11</div>
<div class="a" style="left:30px;top:459px;width:972px;height:1px;background:#d4d4d4"></div><div class="a" style="left:1px;top:459px;width:28px;height:1px;background:#b1b1b1"></div><div class="c" style="left:1px;top:445px;width:28px">12</div>
<div class="a" style="left:30px;top:477px;width:972px;height:1px;background:#d4d4d4"></div><div class="a" style="left:1px;top:477px;width:28px;height:1px;background:#b1b1b1"></div><div class="c" style="left:1px;top:463px;width:28px">13</div>
<div class="a" style="left:30px;top:495px;width:972px;height:1px;background:#d4d4d4"></div><div class="a" style="left:1px;top:495px;width:28px;height:1px;background:#b1b1b1"></div><div class="c" style="left:1px;top:481px;width:28px">14</div>
<div class="a" style="left:30px;top:513px;width:972px;height:1px;background:#d4d4d4"></div><div class="a" style="left:1px;top:513px;width:28px;height:1px;background:#b1b1b1"></div><div class="c" style="left:1px;top:499px;width:28px">15</div>
<div class="a" style="left:30px;top:531px;width:972px;height:1px;background:#d4d4d4"></div><div class="a" style="left:1px;top:531px;width:28px;height:1px;background:#b1b1b1"></div><div class="c" style="left:1px;top:517px;width:28px">16</div>
<div class="a" style="left:30px;top:549px;width:972px;height:1px;background:#d4d4d4"></div><div class="a" style="left:1px;top:549px;width:28px;height:1px;background:#b1b1b1"></div><div class="c" style="left:1px;top:535px;width:28px">17</div>
<div class="a" style="left:30px;top:567px;width:972px;height:1px;background:#d4d4d4"></div><div class="a" style="left:1px;top:567px;width:28px;height:1px;background:#b1b1b1"></div><div class="c" style="left:1px;top:553px;width:28px">18</div>
<div class="c" style="left:1px;top:571px;width:28px">19</div>
<div class="a" style="left:30px;top:232px;width:517px;height:27px;background:#fff"></div><div class="t" style="left:230px;top:235px;font-size:24px;color:#000;transform:scaleX(0.983)">名古屋支店</div>
<div class="a" style="left:30px;top:277px;width:518px;height:2px;background:#000"></div><div class="a" style="left:30px;top:296px;width:518px;height:1px;background:#000"></div><div class="a" style="left:30px;top:386px;width:518px;height:1px;background:#000"></div><div class="a" style="left:30px;top:404px;width:518px;height:2px;background:#000"></div>
<div class="t" style="left:31px;top:299px;font-size:14px;color:#000;transform:scaleX(0.982)">ワニchanぬいぐるみ</div><div class="n" style="left:258px;top:300px">47,840</div><div class="n" style="left:330px;top:300px">47,840</div><div class="n" style="left:402px;top:300px">59,800</div><div class="n" style="left:474px;top:300px">155,480</div>
<div class="t" style="left:33px;top:317px;font-size:14px;color:#000">爬虫類になれるパウダー</div><div class="n" style="left:258px;top:318px">49,900</div><div class="n" style="left:330px;top:318px">99,800</div><div class="n" style="left:402px;top:318px">49,900</div><div class="n" style="left:474px;top:318px">199,600</div>
<div class="t" style="left:31px;top:335px;font-size:14px;color:#000;transform:scaleX(0.945)">ピンク色に染めるヘアカラー</div><div class="n" style="left:258px;top:336px">8,940</div><div class="n" style="left:330px;top:336px">14,900</div><div class="n" style="left:402px;top:336px">24,900</div><div class="n" style="left:474px;top:336px">38,740</div>
<div class="t" style="left:31px;top:353px;font-size:14px;color:#000;transform:scaleX(0.903)">ワニchanとチョコレートを食べよう！</div><div class="n" style="left:258px;top:354px">15,800</div><div class="n" style="left:330px;top:354px">55,600</div><div class="n" style="left:402px;top:354px">33,500</div><div class="n" style="left:474px;top:354px">104,900</div>
<div class="t" style="left:33px;top:371px;font-size:14px;color:#000;transform:scaleX(0.948)">恒温動物に進化するサプリメント</div><div class="n" style="left:258px;top:372px">59,400</div><div class="n" style="left:330px;top:372px">99,000</div><div class="n" style="left:402px;top:372px">99,000</div><div class="n" style="left:474px;top:372px">257,400</div>
<div class="t" style="left:34px;top:389px;font-size:14px;color:#000;font-weight:bold;transform:scaleX(1.036)">合計</div><div class="n" style="left:258px;top:390px">181,880</div><div class="n" style="left:330px;top:390px">317,140</div><div class="n" style="left:402px;top:390px">257,100</div><div class="n" style="left:474px;top:390px">756,120</div>
<div class="t" style="left:282px;top:281px;font-size:14px;color:#000;font-weight:bold;transform:scaleX(1.101)">1月</div><div class="t" style="left:354px;top:281px;font-size:14px;color:#000;font-weight:bold;transform:scaleX(1.101)">2月</div><div class="t" style="left:426px;top:281px;font-size:14px;color:#000;font-weight:bold;transform:scaleX(1.101)">3月</div><div class="t" style="left:497px;top:281px;font-size:14px;color:#000;font-weight:bold;transform:scaleX(1.036)">合計</div>
<div class="a" style="left:402px;top:349px;width:75px;height:21px;border:2px solid #217346"></div><div class="a" style="left:472px;top:365px;width:7px;height:7px;background:#fff"></div><div class="a" style="left:473px;top:366px;width:5px;height:5px;background:#217346"></div>
<div class="a" style="left:1003px;top:214px;width:21px;height:365px;background:#e6e6e6"></div><div class="a" style="left:1006px;top:216px;width:15px;height:14px;background:#fff;border:1px solid #c6c6c6"></div><svg class="a" style="left:1009.5px;top:220px" width="8" height="5" viewBox="0 0 8 5"><path d="M0 5 H8 L4 0.5 Z" fill="#606060"/></svg><div class="a" style="left:1006px;top:231px;width:15px;height:317px;background:#fff;border:1px solid #c6c6c6"></div><div class="a" style="left:1006px;top:548px;width:15px;height:17px;background:#d6d6d6"></div><div class="a" style="left:1006px;top:565px;width:15px;height:15px;background:#fff;border:1px solid #c6c6c6"></div><svg class="a" style="left:1009.5px;top:570px" width="8" height="5" viewBox="0 0 8 5"><path d="M0 0 H8 L4 4.5 Z" fill="#606060"/></svg>
<div class="a" style="left:1px;top:579px;width:1023px;height:28px;background:#e6e6e6"></div><div class="a" style="left:1px;top:579px;width:1002px;height:1px;background:#9b9b9b"></div>
<svg class="a" style="left:28px;top:589px" width="4" height="7" viewBox="0 0 4 7"><path d="M4 0 V7 L0 3.5 Z" fill="#c3c3c3"/></svg><svg class="a" style="left:57px;top:589px" width="4" height="7" viewBox="0 0 4 7"><path d="M0 0 V7 L4 3.5 Z" fill="#c3c3c3"/></svg><div class="a" style="left:253px;top:580px;width:1px;height:24px;background:#b4b4b4"></div><div class="a" style="left:343px;top:580px;width:1px;height:24px;background:#b4b4b4"></div><div class="a" style="left:254px;top:579px;width:89px;height:25px;background:#fff"></div><div class="a" style="left:253px;top:602px;width:91px;height:2px;background:#217346"></div><div class="t" style="left:113px;top:586px;font-size:13px;color:#444;transform:scaleX(0.981)">大阪支店</div><div class="t" style="left:189.5px;top:586px;font-size:13px;color:#444;transform:scaleX(0.981)">東京支店</div><div class="t" style="left:265px;top:586px;font-size:13px;color:#217346">名古屋支店</div><div class="t" style="left:354.5px;top:586px;font-size:13px;color:#444;transform:scaleX(0.923)">平均</div><div class="a" style="left:101px;top:583px;width:1px;height:20px;background:#ababab"></div><div class="a" style="left:177px;top:583px;width:1px;height:20px;background:#ababab"></div><div class="a" style="left:392px;top:583px;width:1px;height:20px;background:#ababab"></div><svg class="a" style="left:425px;top:585px" width="16" height="16" viewBox="0 0 16 16"><circle cx="8" cy="8" r="7" fill="none" stroke="#777" stroke-width="1.1"/><path d="M8 4.5 V11.5 M4.5 8 H11.5" stroke="#777" stroke-width="1.3"/></svg><div class="a" style="left:615px;top:588px;width:2px;height:2px;background:#bdbdbd"></div><div class="a" style="left:615px;top:592px;width:2px;height:2px;background:#bdbdbd"></div><div class="a" style="left:615px;top:596px;width:2px;height:2px;background:#bdbdbd"></div><div class="a" style="left:632px;top:586px;width:15px;height:15px;background:#fff;border:1px solid #c6c6c6"></div><svg class="a" style="left:637px;top:589.5px" width="5" height="8" viewBox="0 0 5 8"><path d="M5 0 V8 L0.5 4 Z" fill="#606060"/></svg><div class="a" style="left:957px;top:586px;width:31px;height:15px;background:#d6d6d6"></div><div class="a" style="left:648px;top:586px;width:309px;height:15px;background:#fff;border:1px solid #c6c6c6"></div><div class="a" style="left:988px;top:586px;width:15px;height:15px;background:#fff;border:1px solid #c6c6c6"></div><svg class="a" style="left:993.5px;top:589.5px" width="5" height="8" viewBox="0 0 5 8"><path d="M0 0 V8 L4.5 4 Z" fill="#606060"/></svg>
<div class="a" style="left:1px;top:607px;width:1023px;height:22px;background:#f3f2f1"></div><div class="a" style="left:1px;top:607px;width:1023px;height:1px;background:#d9d9d9"></div><div class="t" style="left:9px;top:612px;font-size:12px;color:#444">準備完了</div><div class="t" style="left:72px;top:612px;font-size:12px;color:#444">再計算</div><svg class="a" style="left:129px;top:612px" width="14" height="13" viewBox="0 0 14 13"><rect x="0.5" y="0.5" width="11" height="11" fill="none" stroke="#555" stroke-width="1"/><path d="M0.5 3.5 H11.5 M3 6 H7 M3 8.5 H6" stroke="#555" stroke-width="1"/><circle cx="10" cy="9.5" r="3" fill="#f3f2f1" stroke="#555" stroke-width="1"/><circle cx="10" cy="9.5" r="1.2" fill="#555"/></svg><div class="a" style="left:707px;top:608px;width:40px;height:21px;background:#c6c4c2"></div><svg class="a" style="left:720px;top:611px" width="14" height="13" viewBox="0 0 14 13"><rect x="0.7" y="0.7" width="12.2" height="11.8" fill="#dedede" stroke="#262626" stroke-width="1.3"/><path d="M0.7 4.6 H12.9 M0.7 8.6 H12.9 M4.7 0.7 V12.5 M8.8 0.7 V12.5" stroke="#262626" stroke-width="1.2"/></svg><svg class="a" style="left:760px;top:611px" width="14" height="13" viewBox="0 0 14 13"><rect x="0.6" y="0.6" width="13" height="12" fill="none" stroke="#3b3a39" stroke-width="1.2"/><rect x="3.5" y="3.2" width="7" height="6.8" fill="none" stroke="#3b3a39" stroke-width="1"/><path d="M5 5.3 H9 M5 6.8 H9 M5 8.3 H9" stroke="#3b3a39" stroke-width="0.8"/></svg><svg class="a" style="left:800px;top:611px" width="14" height="13" viewBox="0 0 14 13"><rect x="0.6" y="0.6" width="13" height="12" fill="none" stroke="#3b3a39" stroke-width="1.2"/><path d="M4.6 0.6 V7.4 H8.8 V0.6 M0.6 7.8 H9" fill="none" stroke="#3b3a39" stroke-width="1.1"/></svg><div class="a" style="left:832px;top:618px;width:8px;height:1px;background:#444"></div><div class="a" style="left:846px;top:618px;width:100px;height:1px;background:#8a8a8a"></div><div class="a" style="left:894px;top:612px;width:4px;height:12px;background:#666"></div><div class="a" style="left:951px;top:618px;width:8px;height:1px;background:#444"></div><div class="a" style="left:954.5px;top:614px;width:1px;height:9px;background:#444"></div><div class="t" style="left:972px;top:612px;font-size:12px;color:#444;transform:scaleX(1.042)">100%</div>
<div class="a" style="left:0px;top:35px;width:1px;height:595px;background:#217346"></div><div class="a" style="left:1024px;top:35px;width:1px;height:595px;background:#217346"></div><div class="a" style="left:0px;top:629px;width:1025px;height:1px;background:#217346"></div>
</body></html>
